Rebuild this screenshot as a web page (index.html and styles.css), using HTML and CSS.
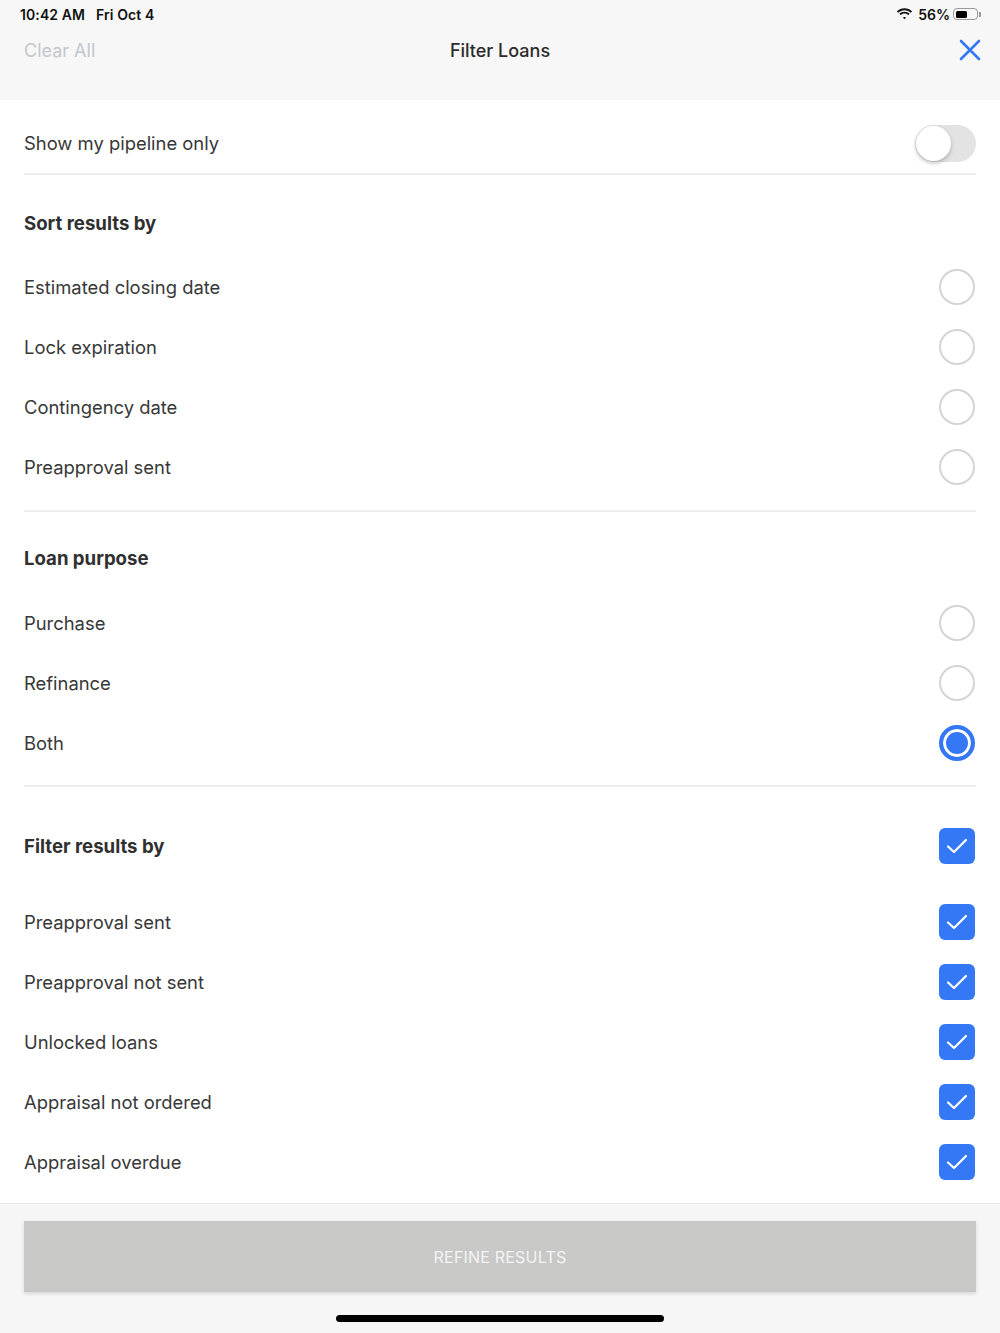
FILE: index.html
```html
<!DOCTYPE html>
<html lang="en">
<head>
    <meta charset="UTF-8">
    <meta name="viewport" content="width=device-width, initial-scale=1.0">
    <title>Filter Loans</title>
    <link rel="stylesheet" href="styles.css">
</head>
<body>

<div class="screen">

    <!-- Top bar -->
    <div class="top">
        <div class="status-bar">
            <span class="status-time">10:42 AM&nbsp;&nbsp;&nbsp;Fri Oct 4</span>
            <span class="status-right">
                <svg class="wifi" width="17" height="12" viewBox="0 0 17 12">
                    <path d="M8.5 2.2c2.4 0 4.6.9 6.3 2.5l1.3-1.3C14.1 1.4 11.4.3 8.5.3S2.9 1.4.9 3.4l1.3 1.3C3.9 3.1 6.1 2.2 8.5 2.2z" fill="#111"/>
                    <path d="M8.5 5.6c1.5 0 2.8.6 3.9 1.5l1.3-1.3C12.3 4.5 10.5 3.7 8.5 3.7s-3.8.8-5.2 2.1l1.3 1.3c1.1-.9 2.4-1.5 3.9-1.5z" fill="#111"/>
                    <path d="M8.5 8.9c.7 0 1.2.3 1.6.6L8.5 11.2 6.9 9.5c.4-.3 1-.6 1.6-.6z" fill="#111"/>
                </svg>
                <span class="battery-text">56%</span>
                <span class="battery"><span class="battery-level"></span></span>
                <span class="battery-cap"></span>
            </span>
        </div>
        <div class="nav-bar">
            <span class="clear-all">Clear All</span>
            <span class="nav-title">Filter Loans</span>
            <svg class="close-icon" width="22" height="22" viewBox="0 0 22 22">
                <path d="M2 2L20 20M20 2L2 20" stroke="#3478f6" stroke-width="2.6" stroke-linecap="round"/>
            </svg>
        </div>
    </div>

    <!-- Scrolling content -->
    <div class="content">
        <div class="pipeline-row">
            <span class="label">Show my pipeline only</span>
            <span class="toggle"><span class="toggle-knob"></span></span>
        </div>

        <div class="section section-sort">
            <div class="heading">Sort results by</div>
            <div class="options">
                <div class="row"><span class="label">Estimated closing date</span><span class="radio"></span></div>
                <div class="row"><span class="label">Lock expiration</span><span class="radio"></span></div>
                <div class="row"><span class="label">Contingency date</span><span class="radio"></span></div>
                <div class="row"><span class="label">Preapproval sent</span><span class="radio"></span></div>
            </div>
        </div>

        <div class="section section-purpose">
            <div class="heading">Loan purpose</div>
            <div class="options">
                <div class="row"><span class="label">Purchase</span><span class="radio"></span></div>
                <div class="row"><span class="label">Refinance</span><span class="radio"></span></div>
                <div class="row"><span class="label">Both</span><span class="radio selected"></span></div>
            </div>
        </div>

        <div class="section section-filter">
            <div class="heading heading-check">
                <span>Filter results by</span>
                <span class="check"><svg width="22" height="16" viewBox="0 0 22 16"><path d="M2 8.5L8 14L20 2" stroke="#fff" stroke-width="2.2" fill="none" stroke-linecap="round" stroke-linejoin="round"/></svg></span>
            </div>
            <div class="options options-filter">
                <div class="row"><span class="label">Preapproval sent</span><span class="check"><svg width="22" height="16" viewBox="0 0 22 16"><path d="M2 8.5L8 14L20 2" stroke="#fff" stroke-width="2.2" fill="none" stroke-linecap="round" stroke-linejoin="round"/></svg></span></div>
                <div class="row"><span class="label">Preapproval not sent</span><span class="check"><svg width="22" height="16" viewBox="0 0 22 16"><path d="M2 8.5L8 14L20 2" stroke="#fff" stroke-width="2.2" fill="none" stroke-linecap="round" stroke-linejoin="round"/></svg></span></div>
                <div class="row"><span class="label">Unlocked loans</span><span class="check"><svg width="22" height="16" viewBox="0 0 22 16"><path d="M2 8.5L8 14L20 2" stroke="#fff" stroke-width="2.2" fill="none" stroke-linecap="round" stroke-linejoin="round"/></svg></span></div>
                <div class="row"><span class="label">Appraisal not ordered</span><span class="check"><svg width="22" height="16" viewBox="0 0 22 16"><path d="M2 8.5L8 14L20 2" stroke="#fff" stroke-width="2.2" fill="none" stroke-linecap="round" stroke-linejoin="round"/></svg></span></div>
                <div class="row"><span class="label">Appraisal overdue</span><span class="check"><svg width="22" height="16" viewBox="0 0 22 16"><path d="M2 8.5L8 14L20 2" stroke="#fff" stroke-width="2.2" fill="none" stroke-linecap="round" stroke-linejoin="round"/></svg></span></div>
                <div class="row row-peek"><span class="label"></span><span class="check"></span></div>
            </div>
        </div>
    </div>

    <!-- Bottom -->
    <div class="footer">
        <button class="refine-button">REFINE RESULTS</button>
        <div class="home-indicator"></div>
    </div>

</div>

</body>
</html>
```

FILE: styles.css
```css
html, body {
    margin: 0;
    padding: 0;
}
body {
    font-family: Inter, "Noto Sans", sans-serif;
    color: #363636;
    background-color: #fff;
}
.screen {
    width: 1000px;
    height: 1333px;
    display: flex;
    flex-direction: column;
    overflow: hidden;
}

/* top bar */
.top {
    height: 100px;
    background-color: #f7f7f7;
    flex: none;
}
.status-bar {
    height: 28px;
    display: flex;
    justify-content: space-between;
    align-items: center;
    padding: 0 19px 0 20px;
    font-size: 14px;
    font-weight: 600;
    color: #111;
}
.status-time {
    letter-spacing: 0.1px;
}
.status-right {
    display: flex;
    align-items: center;
}
.wifi {
    margin-right: 5px;
}
.battery-text {
    margin-right: 3px;
}
.battery {
    width: 25px;
    height: 12px;
    border: 1.5px solid #9a9a9a;
    border-radius: 4px;
    padding: 1.5px;
    box-sizing: border-box;
    display: flex;
}
.battery-level {
    width: 56%;
    height: 100%;
    background-color: #000;
    border-radius: 1.5px;
}
.battery-cap {
    width: 2px;
    height: 5px;
    background-color: #9a9a9a;
    border-radius: 0 1px 1px 0;
    margin-left: 1px;
}
.nav-bar {
    height: 44px;
    display: flex;
    align-items: center;
    justify-content: space-between;
    padding: 0 19px 0 24px;
    position: relative;
}
.clear-all {
    font-size: 18px;
    color: #c3c6ce;
}
.nav-title {
    position: absolute;
    left: 0;
    right: 0;
    text-align: center;
    font-size: 18px;
    font-weight: 500;
    color: #2c2c2c;
    pointer-events: none;
}

/* content */
.content {
    flex: 1;
    overflow: hidden;
    padding: 0 24px;
}
.label {
    font-size: 18.4px;
    color: #383838;
}
.pipeline-row {
    height: 60px;
    margin-top: 13px;
    display: flex;
    justify-content: space-between;
    align-items: center;
    border-bottom: 2px solid #ececec;
}
.toggle {
    width: 61px;
    height: 37px;
    border-radius: 19px;
    background-color: #e3e3e3;
    display: flex;
    align-items: center;
    padding: 1px;
    box-sizing: border-box;
}
.toggle-knob {
    width: 35px;
    height: 35px;
    border-radius: 50%;
    background-color: #fff;
    box-shadow: 0 2px 4px rgba(0, 0, 0, 0.25);
}
.section {
    border-bottom: 2px solid #ececec;
}
.section-sort {
    padding: 18px 0 13px;
}
.section-purpose {
    padding: 16px 0 12px;
}
.section-filter {
    padding-top: 29px;
    border-bottom: none;
}
.heading {
    height: 60px;
    display: flex;
    align-items: center;
    justify-content: space-between;
    font-size: 18.6px;
    font-weight: 700;
    color: #303030;
}
.section-sort .options {
    margin-top: 4px;
}
.section-purpose .options {
    margin-top: 5px;
}
.options-filter {
    margin-top: 16px;
}
.row {
    height: 60px;
    display: flex;
    justify-content: space-between;
    align-items: center;
}
.radio {
    width: 36px;
    height: 36px;
    border-radius: 50%;
    border: 2px solid #d4d4d4;
    box-sizing: border-box;
    margin-right: 1px;
}
.radio.selected {
    border: 4px solid #3478f6;
    background-color: #3478f6;
    box-shadow: inset 0 0 0 3px #fff;
}
.check {
    width: 36px;
    height: 36px;
    border-radius: 6px;
    background-color: #3478f6;
    display: flex;
    align-items: center;
    justify-content: center;
    margin-right: 1px;
}

/* footer */
.footer {
    flex: none;
    height: 130px;
    background-color: #f6f6f6;
    border-top: 1px solid #e6e6e6;
    padding: 17px 24px 0;
    box-sizing: border-box;
    display: flex;
    flex-direction: column;
    align-items: center;
}
.refine-button {
    width: 100%;
    height: 71px;
    border: none;
    background-color: #c8c8c6;
    color: #f4f4f4;
    font-family: Inter, "Noto Sans", sans-serif;
    font-size: 16px;
    letter-spacing: 0.2px;
    box-shadow: 0 2px 4px rgba(0, 0, 0, 0.12);
}
.home-indicator {
    width: 328px;
    height: 7px;
    border-radius: 4px;
    background-color: #000;
    margin-top: 23px;
}
```
